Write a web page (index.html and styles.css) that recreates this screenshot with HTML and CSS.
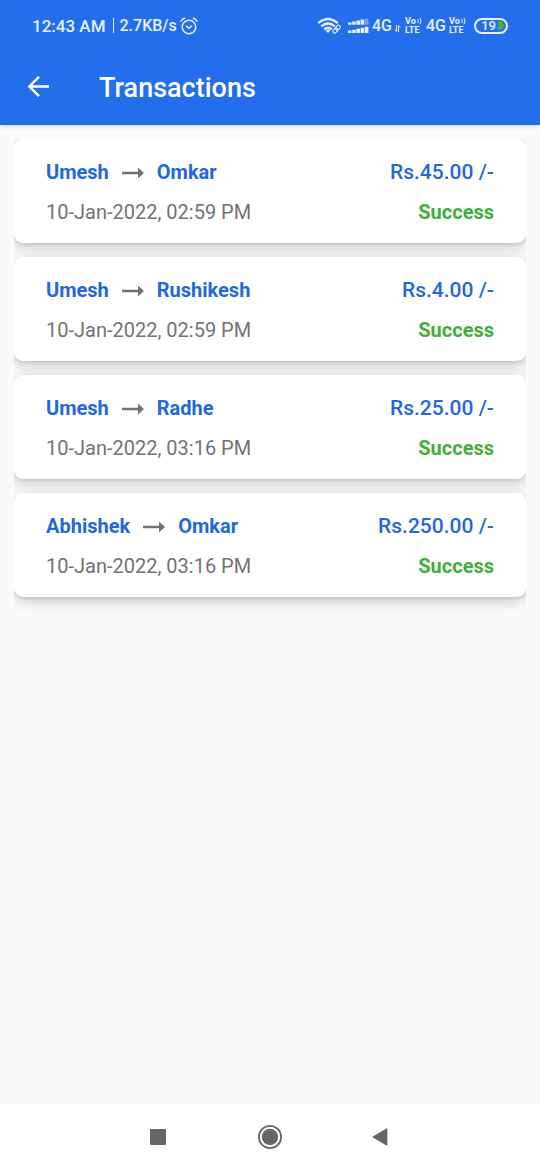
FILE: index.html
```html
<!DOCTYPE html>
<html lang="en">
<head>
<meta charset="utf-8">
<meta name="viewport" content="width=device-width, initial-scale=1">
<title>Transactions</title>
<link rel="stylesheet" href="styles.css">
</head>
<body class="screen">
<svg class="symbols" aria-hidden="true">
  <symbol id="arrow" viewBox="0 0 22 12"><path d="M0 4.8H16V.5L22 6l-6 5.5V7.2H0z" fill="#737373"/></symbol>
</svg>
<div class="top">
  <div class="status">
    <div class="status-left">
      <span class="clock">12:43 AM</span><span class="bar"></span><span class="speed">2.7KB/s</span>
      <svg class="alarm" viewBox="0 0 18 18" fill="none" stroke="#e6f0ff" stroke-width="1.5" stroke-linecap="round"><circle cx="9" cy="10" r="6.8"/><path d="M1 4.2Q2 2 4.6 1.2M17 4.2Q16 2 13.4 1.2M6.4 9.2L9 11.3L11.6 9.2"/></svg>
    </div>
    <div class="status-right">
      <svg class="wifi" viewBox="0 0 25 18" fill="none" stroke="#e6f0ff"><path d="M1.2 6.2Q11 -2.2 20.8 6.2M4.2 9.4Q11 3.6 17.8 9.4M7.2 12.4Q11 9.2 14.8 12.4" stroke-width="2.3"/><path d="M8.6 13.4Q11 11.4 13.4 13.4L11 16z" fill="#e6f0ff" stroke="none"/><g transform="rotate(-48 19.5 12)" stroke-width="1.1"><rect x="14.8" y="10.3" width="5.6" height="3.6" rx="1.8"/><rect x="18.6" y="10.3" width="5.6" height="3.6" rx="1.8"/></g></svg>
      <svg class="signal" viewBox="0 0 21 16" fill="#e6f0ff"><path d="M0 4.4h3.6V6.8H0zM4.2 3.6h3.6v3.2H4.2zM8.4 2.6H12v4.2H8.4zM12.6 1.6h3.6v5.2h-3.6zM0 12.6h3.6V15H0zM4.2 11.8h3.6V15H4.2zM8.4 10.8H12V15H8.4zM12.6 9.8h3.6V15h-3.6zM16.8 8.8h3.6V15h-3.6z"/><path d="M16.8.6h3.6v6.2h-3.6z" opacity=".4"/></svg>
      <span class="net">4G</span>
      <svg class="data" viewBox="0 0 7 7" fill="none" stroke="#e6f0ff"><path d="M2.5 0v6.5L.5 4.5M4.5 7V.7l2 1.8"/></svg>
      <span class="volte volte-first"><span class="vo">Vo<svg class="wave" viewBox="0 0 5 8" fill="none" stroke="#e6f0ff"><path d="M.7 2Q2 4 .7 6M2.9 .8Q5.2 4 2.9 7.2"/></svg></span><span>LTE</span></span>
      <span class="net">4G</span>
      <span class="volte"><span class="vo">Vo<svg class="wave" viewBox="0 0 5 8" fill="none" stroke="#e6f0ff"><path d="M.7 2Q2 4 .7 6M2.9 .8Q5.2 4 2.9 7.2"/></svg></span><span>LTE</span></span>
      <span class="battery"><span>19</span><svg class="charge" viewBox="0 0 6 10"><path d="M0 0h1Q6 1 6 5T1 10H0z" fill="#42b72a"/></svg></span>
    </div>
  </div>
  <header class="appbar">
    <button class="back" aria-label="Back"><svg viewBox="0 0 24 24" fill="none" stroke="#fff" stroke-width="2.4"><path d="M23 10.5H3.5M13 .8L3.3 10.5l9.7 9.7"/></svg></button>
    <h1 class="title">Transactions</h1>
  </header>
</div>
<main class="content">
  <ul class="list">
    <li class="card">
      <div class="row"><span class="people">Umesh <svg class="arrow" role="img" aria-label="to"><use href="#arrow"/></svg> Omkar</span><span class="amount">Rs.45.00 /-</span></div>
      <div class="row"><time class="date">10-Jan-2022, 02:59 PM</time><span class="result">Success</span></div>
    </li>
    <li class="card">
      <div class="row"><span class="people">Umesh <svg class="arrow" role="img" aria-label="to"><use href="#arrow"/></svg> Rushikesh</span><span class="amount">Rs.4.00 /-</span></div>
      <div class="row"><time class="date">10-Jan-2022, 02:59 PM</time><span class="result">Success</span></div>
    </li>
    <li class="card">
      <div class="row"><span class="people">Umesh <svg class="arrow" role="img" aria-label="to"><use href="#arrow"/></svg> Radhe</span><span class="amount">Rs.25.00 /-</span></div>
      <div class="row"><time class="date">10-Jan-2022, 03:16 PM</time><span class="result">Success</span></div>
    </li>
    <li class="card">
      <div class="row"><span class="people">Abhishek <svg class="arrow" role="img" aria-label="to"><use href="#arrow"/></svg> Omkar</span><span class="amount">Rs.250.00 /-</span></div>
      <div class="row"><time class="date">10-Jan-2022, 03:16 PM</time><span class="result">Success</span></div>
    </li>
  </ul>
</main>
<nav class="navbar">
  <button class="key" aria-label="Recent apps"><svg viewBox="0 0 24 24"><rect x="3" y="4" width="16" height="16" rx="1" fill="#666"/></svg></button>
  <button class="key" aria-label="Home"><svg viewBox="0 0 24 24"><circle cx="12" cy="12" r="11.1" fill="none" stroke="#666" stroke-width="1.8"/><circle cx="12" cy="12" r="8.2" fill="#666"/></svg></button>
  <button class="key" aria-label="Back"><svg viewBox="0 0 24 24"><path d="M3 12L17.4 3.4q1-.4 1 .6v16q0 1-1 .6z" fill="#666"/></svg></button>
</nav>
</body>
</html>
```

FILE: styles.css
```css
* { box-sizing: border-box; }
.screen {
  margin: 0;
  min-height: 100vh;
  display: flex;
  flex-direction: column;
  background: #fafafa;
  font-family: Roboto, "Liberation Sans", sans-serif;
}
.symbols { position: absolute; width: 0; height: 0; }
svg { display: block; flex: none; }
button { border: 0; padding: 0; background: none; }
.top {
  background: #246eeb;
  box-shadow: 0 1px 6px rgba(0, 0, 0, .16);
  color: #fff;
}
.status {
  display: flex;
  justify-content: space-between;
  height: 51px;
  padding: 0 32px;
  color: #e6f0ff;
  font-weight: 500;
}
.status-left, .status-right { display: flex; align-items: center; }
.clock { font-size: 17px; }
.bar { width: 1px; height: 15px; margin: 0 6px 0 7px; background: #e6f0ff; }
.speed { font-size: 16px; }
.alarm { width: 18px; height: 18px; margin-left: 3px; }
.wifi { width: 25px; height: 18px; margin-right: 6px; }
.signal { width: 21px; height: 16px; margin-right: 3px; }
.net { font-size: 16px; }
.data { width: 7px; height: 7px; margin: 6px 4px 0 2px; }
.volte {
  display: flex;
  flex-direction: column;
  width: 18px;
  margin: 0 7px 0 3px;
  font-size: 9px;
  line-height: 9px;
  font-weight: 700;
}
.volte-first { margin: 0 3px 0 0; }
.vo { display: flex; gap: 1px; }
.wave { width: 5px; height: 8px; }
.battery {
  display: flex;
  align-items: center;
  justify-content: flex-end;
  gap: 2px;
  width: 34px;
  height: 16px;
  padding-right: 2px;
  border: 2px solid #e6f0ff;
  border-radius: 8px;
  font-size: 13px;
}
.charge { width: 6px; height: 9px; }
.appbar {
  display: flex;
  align-items: center;
  height: 74px;
  padding: 0 26px;
}
.back { width: 24px; height: 24px; }
.title { margin: 0 0 0 49px; font-size: 27px; line-height: 32px; font-weight: 500; }
.content { flex: 1; padding: 14px; }
.list {
  display: flex;
  flex-direction: column;
  gap: 14px;
  margin: 0;
  padding: 0 0 24px;
  list-style: none;
  overflow: hidden;
}
.card {
  padding: 21px 32px 18px;
  border-radius: 9px;
  background: #fff;
  box-shadow: 0 4px 14px rgba(0, 0, 0, .2), 0 2px 3px rgba(0, 0, 0, .08);
}
.row { display: flex; justify-content: space-between; line-height: 25px; font-size: 20px; }
.row + .row { margin-top: 15px; }
.people { display: flex; align-items: center; gap: 13px; }
.people, .amount { color: #2468d8; font-weight: 700; }
.amount { font-size: 21px; font-weight: 500; }
.arrow { width: 22px; height: 12px; }
.date { color: #737373; }
.result { color: #43ae3c; font-weight: 700; }
.navbar {
  display: flex;
  align-items: center;
  justify-content: center;
  gap: 87px;
  height: 65px;
  padding-bottom: 1px;
  background: #fff;
}
.key { width: 24px; height: 24px; }
```
